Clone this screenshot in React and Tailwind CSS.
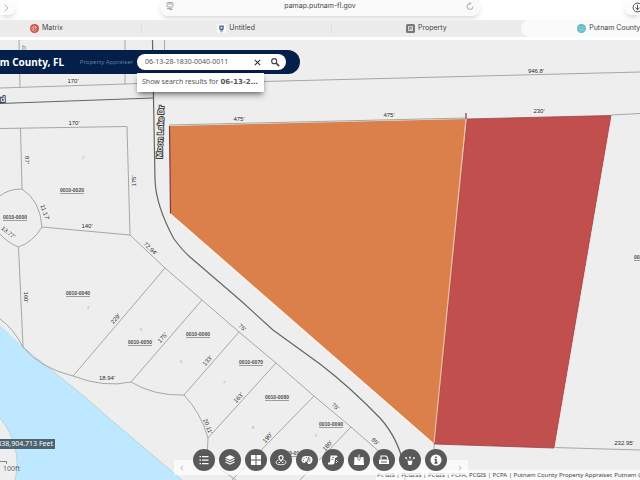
import React from "react";

const tabs = [
  { name: "Matrix", icon: "matrix" },
  { name: "Untitled", icon: "untitled" },
  { name: "Property", icon: "property" },
  { name: "Putnam County,", icon: "putnam", active: true },
];

function TabIcon({ kind }) {
  if (kind === "matrix")
    return (
      <svg viewBox="0 0 18 18" className="size-[9px]">
        <circle cx="9" cy="9" r="9" fill="#cf5048" />
        <path d="M13 6.5A5 5 0 1 0 13 12M9 7h4M9 9.500h4M7 7v5" fill="none" stroke="#f7d6d2" strokeWidth="1.400" />
      </svg>
    );
  if (kind === "untitled")
    return (
      <svg viewBox="0 0 18 18" className="size-[9px]">
        <rect width="18" height="18" rx="3" fill="#fafafa" />
        <path d="M4.500 3h9v6a4.500 4.500 0 0 1-9 0z" fill="#536692" />
        <circle cx="9" cy="7.500" r="2" fill="#e8ecf6" />
        <path d="M6 15.500h6" stroke="#8190b0" strokeWidth="1.500" />
      </svg>
    );
  if (kind === "property")
    return (
      <svg viewBox="0 0 18 18" className="size-[9px]">
        <rect width="18" height="18" rx="3" fill="#77777b" />
        <rect x="4" y="4" width="10" height="10" rx="1" fill="#d5d5d8" />
        <path d="M7 12V6.500h4v3H7" fill="none" stroke="#77777b" strokeWidth="1.500" />
      </svg>
    );
  return (
    <svg viewBox="0 0 18 18" className="size-[9px]">
      <circle cx="9" cy="9" r="9" fill="#58b9c3" />
      <path d="M3 5l5 2 6-4M2 10l7 1 7-4M5 15l5-2 6 0" fill="none" stroke="#a3dce0" strokeWidth="1.600" />
    </svg>
  );
}

const dims = [
  ["170'", 73, 83, 0], ["170'", 74, 125, 0], ["475'", 239, 121, 0], ["475'", 389, 117, 0],
  ["230'", 539, 113, 0], ["946.8'", 536, 73, 0], ["87'", 25, 160, 90], ["175'", 136, 181, -90],
  ["140'", 87, 228, 0], ["11.17'", 43, 213, 70], ["13.77'", 7, 234, 38], ["72.94'", 149, 250, 42],
  ["160'", 24, 297, 90], ["229'", 117, 320, -48], ["18.94'", 107, 380, 0], ["175'", 164, 339, -48],
  ["75'", 241, 329, 40], ["133'", 209, 362, -48], ["163'", 240, 399, -48], ["190'", 269, 439, -48],
  ["75'", 334, 408, 40], ["180'", 329, 447, -48], ["85'", 374, 443, 40], ["20.11'", 206, 427, 68],
  ["232.95'", 624, 445, 0],
];

const parcels = [
  ["0010-0020", 72, 192], ["0010-0000", 15, 219], ["0010-0040", 78, 295], ["0010-0050", 140, 344],
  ["0010-0060", 198, 336], ["0010-0070", 251, 364], ["0010-0080", 277, 399], ["0010-0090", 331, 426],
  ["0010-0100", 293, 455], ["0020-0010", 646, 259],
];

const lots = [
  ["2", 83, 159], ["4", 88, 309], ["5", 141, 331], ["6", 181, 363], ["7", 224, 384], ["8", 253, 429], ["9", 316, 437],
];

function ParcelMap() {
  return (
    <svg
      viewBox="0 40 640 440"
      preserveAspectRatio="xMidYMid slice"
      role="img"
      aria-label="Parcel map"
      className="absolute inset-0 size-full font-['Liberation_Sans',sans-serif]"
    >
      <rect y="40" width="640" height="440" fill="#eeeeee" />
      <path d="M0 325L20 344L30 354L60 377L85 397L110 419L182 480H15Q23 447 0 418Z" fill="#bee8ff" />
      <path d="M0 418Q23 447 15 480M23 347L60 377L85 397L110 419L182 480" fill="none" stroke="#b4cdd0" strokeWidth="0.800" />
      <g fill="none" stroke="#98a298" strokeWidth="0.900">
        <path d="M19 40L20 87M0 88L125 84L153 83M125 40V84M164.500 40V84M164 84L640 72" />
        <path d="M0 128.500L127 126.500L130 235L42 227M20.500 128L22 189M0 196Q8 189 22 189Q40 200 42 227Q33 242 18.500 247Q8 243 0 234" />
        <path d="M130 235L165 268L202 300L239 332L276 363L314 396L351 427L390 461" />
        <path d="M18.500 247L23 347M165 268L73 376M202 300L131 382M239 332L184 395M276 363L208 438L207 460M314 396L232 480M351 427L300 480" />
        <path d="M0 319Q13 328 23 347Q40 368 73 376Q104 388 131 382Q154 396 184 395Q201 413 208 438M207 460L236 480" />
        <path d="M169 125L466 118M611 115L640 113.500M554 447.500L640 450M434 444V470" />
      </g>
      <g fill="none" stroke="#626664" strokeWidth="1.200">
        <path d="M0 103.500L153 98" />
        <path d="M152.500 40L153.500 98L155 180Q156 206 174 239Q183 251 190 257L240 300L273 330L320 364Q350 387 380 418Q398 438 404 466L405 480" />
      </g>
      <path d="M169.500 126L466 119L434 443.500L170.500 213.500Z" fill="#db7f4b" />
      <path d="M170.500 214.500L434 444.500" stroke="#fff3ea" strokeWidth="1.500" />
      <path d="M467 119L611 115.500L554 448L434 444Z" fill="#c04f4d" stroke="#9b4247" strokeWidth="0.800" />
      <path d="M612 116L555 448" stroke="#f8e4e4" strokeWidth="0.800" />
      <path d="M466 119L434 443" stroke="#f1c0a5" strokeWidth="1.200" />
      <path d="M169.500 126L170.500 213.500M466 113V119" stroke="#82394b" strokeWidth="1.200" />
      <g fill="#1c1c1c" fontSize="6" textAnchor="middle" stroke="#f6f6f6" strokeWidth="0.800" paintOrder="stroke">
        {dims.map(([t, x, y, r]) => (
          <text key={`${t}-${x}-${y}`} transform={`translate(${x} ${y}) rotate(${r})`}>{t}</text>
        ))}
      </g>
      <g fill="#4c4c4c" fontSize="5" fontWeight="700" textAnchor="middle" textDecoration="underline">
        {parcels.map(([t, x, y]) => (
          <text key={t} x={x} y={y}>{t}</text>
        ))}
      </g>
      <g fill="#aaa6a6" fontSize="4" textAnchor="middle">
        {lots.map(([t, x, y]) => (
          <text key={t} x={x} y={y}>{t}</text>
        ))}
      </g>
      <g fill="#eeeeee" stroke="#333" strokeWidth="1.800" paintOrder="stroke" fontSize="8" fontWeight="700" textAnchor="middle">
        <text transform="translate(163 132) rotate(-88)">Moon Lake Dr</text>
        <text transform="translate(0 102) rotate(-2)">Rd</text>
      </g>
      <text x="22" y="50" fill="#777" fontSize="7">h</text>
    </svg>
  );
}

const tools = [
  ["Legend", <path key="i" d="M3 5h3M3 12h3M3 19h3M8 5h13M8 12h13M8 19h13" stroke="currentColor" strokeWidth="2.500" />],
  ["Layers", <path key="i" fill="currentColor" d="M12 2l10 5-10 5L2 7zM4 10l8 4 8-4 2 1.500-10 5-10-5zM4 15l8 4 8-4 2 1.500-10 5-10-5z" />],
  ["Basemaps", <path key="i" fill="currentColor" d="M2 2h9v9H2zM13 2h9v9h-9zM2 13h9v9H2zM13 13h9v9h-9z" />],
  ["Locate", <g key="i" fill="none" stroke="currentColor"><path d="M12 14s-4-4-4-7a4 4 0 0 1 8 0c0 3-4 7-4 7z" strokeWidth="2.500" /><path d="M7 12c-3 1-5 3-5 5 0 6 20 6 20 0 0-2-2-4-5-5M7 17h3M14 17h3" strokeWidth="1.800" /></g>],
  ["Draw", <g key="i"><path fill="currentColor" d="M10 4C5 4 1 7 1 12c0 4 3 6 6 6 2 0 1-3 3-3 3 0 2 5 6 5 4 0 7-4 7-9 0-4-4-7-7-7z" /><path d="M5 9h2M10 7h2M4 13h2M16 5l-4 12M15 10h4M15 14h4" stroke="#595959" strokeWidth="1.800" /></g>],
  ["Measure", <g key="i"><path fill="currentColor" d="M7 3h12a3 3 0 0 1 2 3l-5 2-1 10a4 4 0 0 1-4 3H2v-4h4z" /><path d="M10 7h4M9 11h4" stroke="#595959" strokeWidth="1.500" /><path d="M18 12l3 3-3 3" fill="none" stroke="currentColor" strokeWidth="1.800" /></g>],
  ["Select", <g key="i"><path fill="currentColor" d="M3 6h4l4 7h2l4-7h4l1 16H2z" /><path d="M12 1v9M9 7l3 4 3-4" fill="none" stroke="currentColor" strokeWidth="2" /></g>],
  ["Print", <g key="i"><path d="M6 11V4h10l3 3v4" fill="none" stroke="currentColor" strokeWidth="2.200" /><path fill="currentColor" d="M2 11h20v9H2z" /><path d="M6 16h12" stroke="#595959" strokeWidth="2" /></g>],
  ["Share", <g key="i" fill="currentColor"><path d="M12 8v8M12 16L5 9M12 16l7-7" stroke="currentColor" strokeWidth="0.800" /><circle cx="4" cy="8" r="1.800" /><circle cx="12" cy="7" r="1.800" /><circle cx="20" cy="8" r="1.800" /><path d="M7 14h10l-2 8H9z" /></g>],
  ["About", <g key="i"><circle cx="12" cy="12" r="11" fill="currentColor" /><path d="M12 5v3M9 11h3v7M9 18h6" fill="none" stroke="#505050" strokeWidth="3" /></g>],
];

export default function App() {
  return (
    <div className="flex h-screen flex-col overflow-hidden bg-white font-['Noto_Sans',sans-serif] text-[#444]">
      <header className="flex h-5 shrink-0 items-start justify-between">
        <button aria-label="Forward" className="flex h-[15px] w-4 items-center justify-center rounded-r-lg bg-[#fcfcfc] pr-1 text-[#aaa] shadow-md shadow-black/10">
          <svg viewBox="0 0 8 12" className="h-2 w-[6px]"><path d="M2 1l5 5-5 5" fill="none" stroke="currentColor" strokeWidth="1.300" /></svg>
        </button>
        <div className="flex h-4 w-1/2 items-center justify-between rounded-b-lg bg-[#fafafa] px-[6px] pb-1 shadow-md shadow-black/10">
          <button aria-label="Page settings" className="text-[#888]">
            <svg viewBox="0 0 16 16" className="size-2" fill="none" stroke="currentColor" strokeWidth="1.500">
              <rect x="2" y="1" width="12" height="9" rx="2" /><path d="M4 4h8M2 13h9M7 15h6" />
            </svg>
          </button>
          <input aria-label="Address" defaultValue="pamap.putnam-fl.gov" className="h-3 min-w-0 flex-1 bg-transparent text-center font-['Inter',sans-serif] text-[7px] leading-3 text-[#444] outline-none" />
          <button aria-label="Reload" className="text-[#888]">
            <svg viewBox="0 0 16 16" className="size-2" fill="none" stroke="currentColor" strokeWidth="1.400"><path d="M8 3a6 6 0 1 0 6 6M7 0l3 3-3 3" /></svg>
          </button>
        </div>
        <button aria-label="Downloads" className="flex h-[15px] w-4 items-center justify-end overflow-hidden rounded-l-lg bg-[#fcfcfc] text-[#444] shadow-md shadow-black/10">
          <svg viewBox="0 0 20 20" className="-mr-[3px] size-[11px] shrink-0" fill="none" stroke="currentColor" strokeWidth="1.700"><circle cx="10" cy="10" r="8" /><path d="M10 5v9M6 10l4 4 4-4" /></svg>
        </button>
      </header>

      <nav aria-label="Tabs" className="flex h-5 shrink-0 overflow-hidden border-b-[3px] border-white bg-[#ececec]">
        <div className="-mr-[71px] -ml-12 flex flex-1 font-['Inter',sans-serif]">
          {tabs.map((t, i) => (
            <button
              key={t.name}
              className={
                t.active
                  ? "flex w-1/4 items-center gap-[3px] rounded-full bg-[#fafafa] pl-[56px] text-[7px] whitespace-nowrap"
                  : "flex w-1/4 items-center justify-center"
              }
            >
              {t.active ? (
                <>
                  <TabIcon kind={t.icon} />
                  {t.name}
                </>
              ) : (
                <span className={i < 2 ? "flex h-2 flex-1 items-center justify-center gap-[3px] border-r border-[#dddddd] text-[7px]" : "flex flex-1 items-center justify-center gap-[3px] text-[7px]"}>
                  <TabIcon kind={t.icon} />
                  {t.name}
                </span>
              )}
            </button>
          ))}
        </div>
      </nav>

      <main className="relative min-h-0 flex-1 overflow-hidden">
        <ParcelMap />

        <div className="absolute top-[10px] left-0 flex h-6 w-[300px] items-center rounded-r-full bg-[#04204a] pr-[14px]">
          <h1 className="flex w-16 justify-end text-[10px] leading-4 font-bold whitespace-nowrap text-white">m County, FL</h1>
          <span className="flex-1 pr-1 text-right text-[6px] leading-4 whitespace-nowrap text-[#657998]">Property Appraiser</span>
          <form className="flex h-4 w-[149px] items-center rounded-full bg-white pr-[6px] pl-2" onSubmit={(e) => e.preventDefault()}>
            <input aria-label="Search parcels" defaultValue="06-13-28-1830-0040-0011" className="h-4 min-w-0 flex-1 bg-transparent pb-px text-[7px] leading-4 text-[#555] outline-none" />
            <button type="button" aria-label="Clear" className="mr-2 text-[#333]">
              <svg viewBox="0 0 10 10" className="size-[9px]"><path d="M2 2l6 6M8 2l-6 6" stroke="currentColor" strokeWidth="1.200" /></svg>
            </button>
            <button type="submit" aria-label="Search" className="text-[#444]">
              <svg viewBox="0 0 12 12" className="size-[10px]" fill="none" stroke="currentColor"><circle cx="5" cy="5" r="3" strokeWidth="1.400" /><path d="M7 7l4 4" strokeWidth="2" /></svg>
            </button>
          </form>
        </div>

        <button className="absolute top-[33px] left-[137px] flex h-[19px] w-[127px] items-center gap-[2px] bg-white px-[5px] text-[7px] whitespace-nowrap text-[#555] shadow-md shadow-black/40">
          Show search results for
          <span className="font-['DejaVu_Sans',sans-serif] font-bold">06-13-2…</span>
        </button>

        <div className="absolute bottom-[31px] left-0 flex h-[10px] w-[55px] items-center justify-end overflow-hidden bg-[#4d6470] pr-[2px] text-[7px] whitespace-nowrap text-white">
          838,904.713 Feet
        </div>
        <div className="absolute bottom-[7px] left-0 w-5 text-[#666]">
          <div className="h-[3px] w-[7px] border-t border-r border-[#7d8b8e]" />
          <div className="pl-[3px] text-[7px] leading-[9px]">100ft</div>
        </div>

        <div className="absolute right-0 bottom-0 left-[376px] h-[10px] overflow-hidden bg-white/70 pl-px text-[6px] leading-[10px] whitespace-nowrap text-[#444]">
          Pc GIS | PCGISS | PCGIS | PCPA, PCGIS | PCPA | Putnam County Property Appraiser, Putnam C
        </div>

        <div className="absolute bottom-[5px] left-[174px] flex h-[15px] w-[294px] items-center justify-between bg-white/70 px-[5px] text-[#999]">
          <button aria-label="Previous tools">
            <svg viewBox="0 0 6 8" className="h-[6px] w-[5px]"><path d="M5 1L2 4l3 3" fill="none" stroke="currentColor" /></svg>
          </button>
          <button aria-label="Next tools">
            <svg viewBox="0 0 6 8" className="h-[6px] w-[5px]"><path d="M1 1l3 3-3 3" fill="none" stroke="currentColor" /></svg>
          </button>
        </div>
        <div className="absolute bottom-[9px] left-[193px] flex w-[254px] justify-between">
          {tools.map(([name, icon]) => (
            <button key={name} aria-label={name} className="flex size-[22px] items-center justify-center rounded-full bg-[#595959] text-white">
              <svg viewBox="0 0 24 24" className="size-3">{icon}</svg>
            </button>
          ))}
        </div>
      </main>
    </div>
  );
}
